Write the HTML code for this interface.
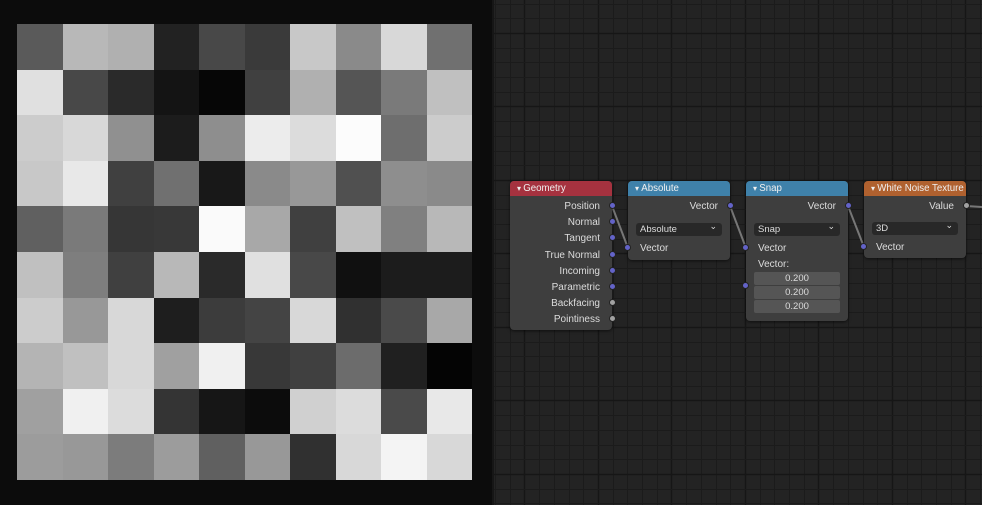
<!DOCTYPE html><html><head><style>
*{margin:0;padding:0;box-sizing:border-box}
html,body{width:982px;height:505px;overflow:hidden}
body{background:#0c0c0c;font-family:"Liberation Sans","DejaVu Sans",sans-serif;position:relative}
#left{position:absolute;left:0;top:0;width:492px;height:505px;background:#0c0c0c}
#grid{position:absolute;left:17px;top:24px;width:455px;height:456px;display:grid;grid-template-columns:repeat(10,1fr);grid-template-rows:repeat(10,1fr)}
#right{position:absolute;left:492px;top:0;width:490px;height:505px;background:#232323;border-left:2px solid #161616;overflow:hidden}
.node{position:absolute;background:#3e3e3e;border-radius:4px;box-shadow:0 1px 3px rgba(0,0,0,.6);font-size:10px;color:#dcdcdc;white-space:nowrap}
.hd{height:15px;border-radius:4px 4px 0 0;padding-left:7px;line-height:15px;color:#f0f0f0;font-size:9.7px;white-space:nowrap;overflow:hidden}
.hd:before{content:"▾ ";font-size:8px}
.r{position:absolute;right:12px;text-align:right}
.l{position:absolute;left:12px}
.dd{position:absolute;left:8px;right:8px;height:13px;background:#282828;border-radius:3px;padding-left:4px;line-height:13px;font-size:9.5px}
.dd:after{content:"⌄";position:absolute;right:5px;top:-3px;font-size:9px}
.f{position:absolute;left:8px;right:8px;height:13px;background:#555;text-align:center;line-height:13px;font-size:9.5px;border-radius:2px}
.s{position:absolute;width:7px;height:7px;border-radius:50%;background:#6363c8;border:0.5px solid #222}
.g{background:#a1a1a1}
</style></head><body>
<div id="left"><div id="grid"></div></div>
<div id="right">
<svg width="490" height="505" style="position:absolute;left:-2px;top:0">
<g id="gl" stroke="#1b1b1b" stroke-width="1"></g>
<g stroke="#777" stroke-width="2" fill="none">
<line x1="120" y1="206" x2="136" y2="248"/><line x1="238" y1="206" x2="254" y2="248"/><line x1="356" y1="206" x2="372" y2="247"/><line x1="474" y1="206" x2="490" y2="207"/>
</g></svg>
</div>
<div class="node" style="left:510px;top:181px;width:102px;height:149px">
<div class="hd" style="background:#a5323f">Geometry</div>
<div class="r" style="top:20px">Position</div><div class="r" style="top:36px">Normal</div><div class="r" style="top:52px">Tangent</div><div class="r" style="top:69px">True Normal</div><div class="r" style="top:85px">Incoming</div><div class="r" style="top:101px">Parametric</div><div class="r" style="top:117px">Backfacing</div><div class="r" style="top:133px">Pointiness</div>
<div class="s" style="left:99px;top:21px"></div><div class="s" style="left:99px;top:37px"></div><div class="s" style="left:99px;top:53px"></div><div class="s" style="left:99px;top:70px"></div><div class="s" style="left:99px;top:86px"></div><div class="s" style="left:99px;top:102px"></div><div class="s g" style="left:99px;top:118px"></div><div class="s g" style="left:99px;top:134px"></div>
</div>
<div class="node" style="left:628px;top:181px;width:102px;height:79px">
<div class="hd" style="background:#3f81aa">Absolute</div>
<div class="r" style="top:20px">Vector</div>
<div class="dd" style="top:42px">Absolute</div>
<div class="l" style="top:62px">Vector</div>
<div class="s" style="left:99px;top:21px"></div><div class="s" style="left:-4px;top:63px"></div>
</div>
<div class="node" style="left:746px;top:181px;width:102px;height:140px">
<div class="hd" style="background:#3f81aa">Snap</div>
<div class="r" style="top:20px">Vector</div>
<div class="dd" style="top:42px">Snap</div>
<div class="l" style="top:62px">Vector</div>
<div class="l" style="top:78px;left:12px">Vector:</div>
<div class="f" style="top:91px">0.200</div><div class="f" style="top:105px">0.200</div><div class="f" style="top:119px">0.200</div>
<div class="s" style="left:99px;top:21px"></div><div class="s" style="left:-4px;top:63px"></div><div class="s" style="left:-4px;top:101px"></div>
</div>
<div class="node" style="left:864px;top:181px;width:102px;height:77px">
<div class="hd" style="background:#b0612f">White Noise Texture</div>
<div class="r" style="top:20px">Value</div>
<div class="dd" style="top:41px">3D</div>
<div class="l" style="top:61px">Vector</div>
<div class="s g" style="left:99px;top:21px"></div><div class="s" style="left:-4px;top:62px"></div>
</div>
<script>
var v="5a b8 b0 22 48 3a c8 8a d8 70 e0 48 2a 14 06 40 b0 55 7a c0 cc d8 90 1c 8e ec dc fc 6e cc c8 e8 40 70 18 8a 98 50 8e 8a 60 7a 36 38 fa a8 40 c0 80 b8 c0 7e 40 b8 2a e0 48 10 1c 1c cc 98 d8 1e 3c 44 d8 30 4a a8 b4 c0 d8 a0 f0 38 40 6c 20 04 a0 f0 dc 34 16 0c d0 dc 4a e8 9c 98 7c 9c 60 98 30 d8 f4 d8".split(" ");
var g=document.getElementById("grid");v.forEach(function(c){var d=document.createElement("div");d.style.background="#"+c+c+c;g.appendChild(d)});
var gl=document.getElementById("gl"),h="";
function maj(p,o){var m=((p-o)%73.5+73.5)%73.5;return m<1.5||m>72;}
for(var i=0;i<34;i++){var ax=495+i*14.7;var X=Math.round(ax-492)+0.5;h+='<line x1="'+X+'" y1="0" x2="'+X+'" y2="505"'+(maj(ax,598)?' stroke="#161616" stroke-width="1.5"':'')+'/>';}
for(var j=0;j<35;j++){var ay=3.5+j*14.7;var Y=Math.round(ay)+0.5;h+='<line x1="0" y1="'+Y+'" x2="490" y2="'+Y+'"'+(maj(ay,33)?' stroke="#161616" stroke-width="1.5"':'')+'/>';}
gl.innerHTML=h;
</script>
</body></html>
